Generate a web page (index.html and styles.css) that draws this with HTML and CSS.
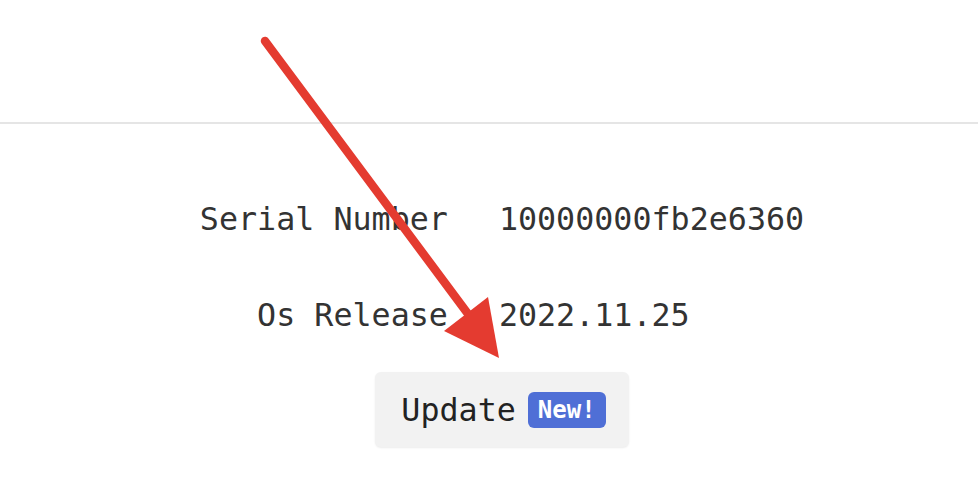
FILE: index.html
```html
<!DOCTYPE html>
<html>
<head>
    <title>Device Info</title>
    <meta charset="utf-8"/>
    <link rel="stylesheet" href="styles.css">
</head>
<body>
    <div class="topbar"></div>
    <div class="main">
        <div class="infoTable">
            <div class="label">Serial Number</div>
            <div class="value">10000000fb2e6360</div>
            <div class="label">Os Release</div>
            <div class="value">2022.11.25</div>
        </div>
        <button class="updateButton" type="button">
            Update <span class="badge">New!</span>
        </button>
    </div>
    <svg class="arrow" viewBox="0 0 978 478" width="978" height="478">
        <line x1="265" y1="41" x2="474" y2="322" stroke="#e43b30" stroke-width="8.5" stroke-linecap="round"/>
        <polygon points="499,358 444,331 488,297" fill="#e43b30"/>
    </svg>
</body>
</html>
```

FILE: styles.css
```css
body {
    margin: 0;
    background-color: #ffffff;
    font-family: "DejaVu Sans Mono", "Liberation Mono", monospace;
    color: #333333;
    position: relative;
    height: 478px;
    overflow: hidden;
}

.topbar {
    height: 122px;
    border-bottom: 2px solid #e5e5e5;
}

.main {
    display: flex;
    flex-direction: column;
    align-items: center;
    padding-left: 26px;
}

.infoTable {
    display: grid;
    grid-template-columns: auto auto;
    column-gap: 51px;
    row-gap: 48px;
    margin-top: 71px;
    font-size: 31.7px;
    line-height: 48px;
}

.label {
    text-align: right;
}

.value {
    text-align: left;
}

.updateButton {
    margin-top: 33px;
    display: flex;
    align-items: center;
    gap: 12px;
    height: 75px;
    padding: 0 23px 0 26px;
    border: none;
    border-radius: 6px;
    background-color: #f2f2f2;
    box-shadow: 0 1px 2px rgba(0, 0, 0, 0.08);
    font-family: "DejaVu Sans Mono", "Liberation Mono", monospace;
    font-size: 31.7px;
    color: #222222;
}

.badge {
    display: inline-block;
    height: 36px;
    line-height: 36px;
    padding: 0 10px;
    border-radius: 6px;
    background-color: #4f6fd6;
    color: #ffffff;
    font-size: 24px;
    font-weight: bold;
}

.arrow {
    position: absolute;
    top: 0;
    left: 0;
    pointer-events: none;
}
```
